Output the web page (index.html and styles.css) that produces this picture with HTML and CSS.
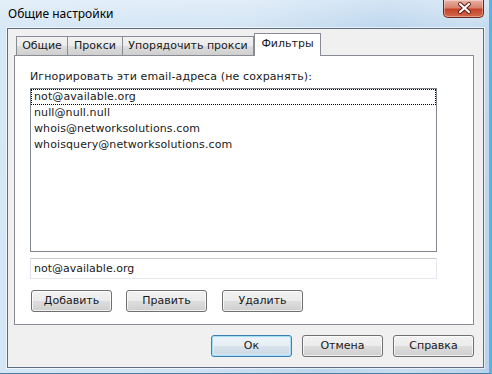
FILE: index.html
```html
<!DOCTYPE html>
<html lang="ru">
<head>
<meta charset="utf-8">
<title>Общие настройки</title>
<link rel="stylesheet" href="styles.css">
</head>
<body>
<div class="window">
  <div class="titlebar">
    <span class="title">Общие настройки</span>
    <div class="close">
      <svg width="41" height="18" viewBox="0 0 41 18">
        <path d="M16 5 L25 13 M25 5 L16 13" stroke="#5a1a10" stroke-width="4" stroke-linecap="round"/>
        <path d="M16 5 L25 13 M25 5 L16 13" stroke="#ffffff" stroke-width="2.2" stroke-linecap="round"/>
      </svg>
    </div>
  </div>
  <div class="client">
    <div class="tabs">
      <div class="tab t1">Общие</div>
      <div class="tab t2">Прокси</div>
      <div class="tab t3">Упорядочить прокси</div>
      <div class="tab t4 selected">Фильтры</div>
    </div>
    <div class="panel">
      <div class="label">Игнорировать эти email-адреса (не сохранять):</div>
      <div class="listbox">
        <div class="item focused">not@available.org</div>
        <div class="item">null@null.null</div>
        <div class="item">whois@networksolutions.com</div>
        <div class="item">whoisquery@networksolutions.com</div>
      </div>
      <div class="textfield">not@available.org</div>
      <div class="row">
        <div class="btn b-add">Добавить</div>
        <div class="btn b-edit">Править</div>
        <div class="btn b-del">Удалить</div>
      </div>
    </div>
    <div class="footer">
      <div class="btn default">Ок</div>
      <div class="btn">Отмена</div>
      <div class="btn">Справка</div>
    </div>
  </div>
</div>
</body>
</html>
```

FILE: styles.css
```css
* { box-sizing: border-box; }
html, body { margin: 0; padding: 0; }
body {
  width: 492px;
  height: 374px;
  overflow: hidden;
  font-family: "DejaVu Sans", Verdana, sans-serif;
  font-size: 11px;
  color: #1a1a1a;
}
.window {
  width: 492px;
  height: 374px;
  display: flex;
  flex-direction: column;
  background:
    linear-gradient(to bottom, rgba(255,255,255,0.35), rgba(255,255,255,0) 30px),
    linear-gradient(100deg, #d6e7f6 0%, #d2e4f4 45%, #bcd6ee 70%, #c8ddf1 85%, #b7d3ec 100%);
  border-right: 3px solid #5ab3e3;
  border-bottom: 1px solid #4a7fa8;
}
.titlebar {
  height: 28px;
  display: flex;
  justify-content: space-between;
  align-items: flex-start;
  padding-left: 8px;
}
.title {
  font-family: "Noto Sans", "Open Sans", sans-serif;
  font-size: 12px;
  line-height: 16px;
  padding-top: 6px;
  color: #000;
}
.close {
  width: 41px;
  height: 18px;
  margin-right: 5px;
  border: 1px solid #6b2a1e;
  border-top: none;
  border-radius: 0 0 5px 5px;
  background: linear-gradient(to bottom, #e9b2a5 0%, #d8826d 45%, #c4432a 55%, #d4694d 100%);
  box-shadow: inset 0 0 0 1px rgba(255,255,255,0.35);
}
.close svg { display: block; margin-top: -1px; }
.client {
  flex: 1;
  margin: 0 5px 5px 7px;
  border: 1px solid #5c6d80;
  box-shadow: 0 0 0 1px rgba(255,255,255,0.6);
  background: #f0f0f0;
  padding: 4px 9px 0 6px;
  display: flex;
  flex-direction: column;
}
.tabs {
  display: flex;
  align-items: flex-end;
  height: 22px;
  padding-left: 2px;
  position: relative;
  z-index: 1;
}
.tab {
  height: 19px;
  border: 1px solid #898c95;
  border-bottom: none;
  background: linear-gradient(to bottom, #f2f2f2 0%, #ebebeb 50%, #dddddd 51%, #cfcfcf 100%);
  text-align: center;
  line-height: 18px;
  margin-left: -1px;
}
.tab:first-child { margin-left: 0; }
.t1 { width: 52px; }
.t2 { width: 56px; }
.t3 { width: 132px; }
.t4 { width: 67px; }
.tab.selected {
  height: 23px;
  background: #fff;
  margin-bottom: -1px;
  line-height: 19px;
  margin-left: 0;
}
.panel {
  height: 270px;
  border: 1px solid #898c95;
  background: #fff;
  padding: 14px 36px 0 15px;
}
.label {
  line-height: 14px;
  height: 14px;
  white-space: nowrap;
  letter-spacing: 0.12px;
}
.listbox {
  margin-top: 4px;
  height: 164px;
  border: 1px solid #828790;
  padding: 0;
}
.item {
  height: 16px;
  line-height: 16px;
  padding-left: 3px;
  white-space: nowrap;
  letter-spacing: 0.1px;
}
.item.focused {
  outline: 1px dotted #000;
  outline-offset: -1px;
}
.textfield {
  margin-top: 6px;
  height: 21px;
  border: 1px solid #e3e9ef;
  border-top-color: #c8ccd2;
  border-left-color: #e2e3ea;
  line-height: 19px;
  padding-left: 3px;
}
.row {
  margin-top: 11px;
  display: flex;
  padding-left: 1px;
}
.btn {
  width: 81px;
  height: 22px;
  border: 1px solid #707070;
  border-radius: 3px;
  background: linear-gradient(to bottom, #f2f2f2 0%, #ebebeb 50%, #dddddd 51%, #cfcfcf 100%);
  box-shadow: inset 0 0 0 1px rgba(255,255,255,0.7);
  text-align: center;
  line-height: 20px;
}
.b-edit { margin-left: 14px; }
.b-del { margin-left: 15px; }
.footer {
  margin-top: 10px;
  display: flex;
  justify-content: flex-end;
  gap: 10px;
}
.btn.default {
  border-color: #3c7fb1;
  box-shadow: inset 0 0 0 1px #a6def6, inset 0 0 0 2px rgba(220,240,252,0.6);
  background: linear-gradient(to bottom, #eef4f8 0%, #e6eef4 50%, #d8e3ec 51%, #cbd8e3 100%);
}
```
